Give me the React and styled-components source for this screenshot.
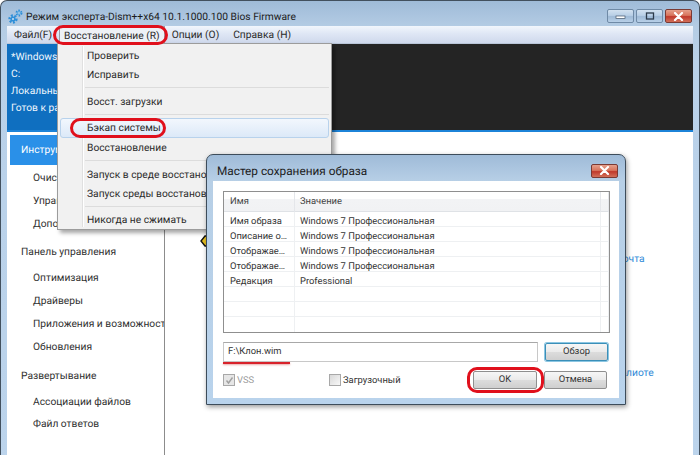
import React from 'react';
import styled, { createGlobalStyle } from 'styled-components';

const Global = createGlobalStyle`
	html, body { margin: 0; padding: 0; background: #fff; }
	body { font-family: Roboto, "Liberation Sans", sans-serif; font-size: 10.25px; color: #2a2a2a; text-rendering: geometricPrecision; }
`;

const Page = styled.div`
	position: relative;
	width: 700px;
	height: 455px;
	overflow: hidden;
`;
const Frame = styled.div`
	display: flex;
	flex-direction: column;
	height: 475px;
	box-sizing: border-box;
	padding: 0 6px 0 6px;
	border: 1px solid #42505e;
	border-bottom: none;
	border-radius: 7px 7px 0 0;
	background: linear-gradient(to bottom, #9fbbd8 0, #b4cce4 26px, #b9d1e9 60px, #bcd4ec 100%);
`;
const TitleBar = styled.div`
	display: flex;
	align-items: center;
	height: 25px;
	flex: none;
	box-sizing: border-box;
	padding-top: 5px;
	color: #1c1c1c;
`;
const AppIcon = styled.svg`
	width: 15px;
	height: 15px;
	margin: 0 3px 0 1px;
	flex: none;
`;
const TitleText = styled.span`
	flex: 1;
	white-space: nowrap;
`;
const Controls = styled.div`
	display: flex;
	gap: 2px;
	margin-right: 1px;
`;
const CtrlBtn = styled.div`
	width: 27px;
	height: 14px;
	display: flex;
	align-items: center;
	justify-content: center;
	box-sizing: border-box;
	border: 1px solid ${p => (p.$close ? '#7a3a34' : '#6f8aa6')};
	border-radius: 2px;
	background: ${p => p.$close
		? 'linear-gradient(to bottom, #e5a08c 0, #d8745c 45%, #c0392b 55%, #d2705a 100%)'
		: 'linear-gradient(to bottom, #d2e1f0 0, #b8cfe6 45%, #9fbad6 55%, #b8d0e8 100%)'};
`;
const MenuBar = styled.div`
	display: flex;
	align-items: center;
	height: 18px;
	flex: none;
	background: linear-gradient(to bottom, #f2f6fc 0, #dfe7f5 45%, #cfd9ec 100%);
	border-bottom: 1px solid #b9c5d8;
	box-sizing: border-box;
	padding-left: 7px;
`;
const MenuTitle = styled.div`
	position: relative;
	height: 100%;
	display: flex;
	align-items: center;
	white-space: nowrap;
	margin-right: ${p => p.$gap}px;
	${p => p.$open && `
		padding: 0 4px;
		box-sizing: border-box;
		border: 1px solid #9a9fa8;
		border-bottom: none;
		background: #eef1f6;
	`}
`;
const Ring = styled.div`
	position: absolute;
	inset: ${p => p.$inset};
	border: 3px solid #e0101c;
	border-radius: ${p => p.$r || 11}px;
	pointer-events: none;
	z-index: 5;
`;
const Strip = styled.div`
	display: flex;
	height: 88px;
	flex: none;
	border-bottom: 2px solid #1c83d8;
	box-sizing: border-box;
`;
const InfoPanel = styled.div`
	width: 157px;
	flex: none;
	box-sizing: border-box;
	padding-top: 4px;
	background: #0f6fc0;
	color: #eef6fd;
	display: flex;
	flex-direction: column;
`;
const InfoLine = styled.div`
	height: 17px;
	line-height: 17px;
	padding-left: 4px;
	white-space: nowrap;
`;
const DarkPanel = styled.div`
	flex: 1;
	background: #242424;
`;
const Body = styled.div`
	flex: 1;
	display: flex;
	min-height: 0;
	background: #fff;
`;
const Sidebar = styled.div`
	width: 158px;
	flex: none;
	box-sizing: border-box;
	border-right: 1px solid #8c8c8c;
	padding: 3px 0 0 3px;
	overflow: hidden;
	white-space: nowrap;
`;
const ActiveItem = styled.div`
	height: 30px;
	line-height: 30px;
	padding-left: 11px;
	background: #2a90e8;
	color: #fff;
	margin-bottom: 2px;
`;
const NavGroup = styled.div`
	height: 27px;
	line-height: 27px;
	margin-top: 3px;
	padding-left: 11px;
	color: #303030;
`;
const NavItem = styled.div`
	height: 22.8px;
	line-height: 22.8px;
	padding-left: 23px;
	color: #303030;
`;
const NavFirst = styled(NavItem)`
	margin-top: 2px;
`;
const Content = styled.div`
	flex: 1;
	display: flex;
	flex-direction: column;
	position: relative;
`;
const KeyIcon = styled.svg`
	width: 10px;
	height: 12px;
	margin: 103px 0 0 35px;
`;
const LinkLine = styled.div`
	color: #2f8ad8;
	white-space: nowrap;
	overflow: hidden;
	margin-left: ${p => p.$left}px;
	width: ${p => p.$w}px;
	margin-top: ${p => p.$top}px;
`;

const DropMenu = styled.div`
	position: absolute;
	left: 57px;
	top: 43px;
	width: 275px;
	height: 187px;
	box-sizing: border-box;
	padding: 2px;
	background: #f1f1f1;
	border: 1px solid #9c9c9c;
	box-shadow: 3px 3px 4px rgba(0, 0, 0, 0.35);
	z-index: 2;
`;
const MenuGutter = styled.div`
	position: absolute;
	left: 24px;
	top: 2px;
	bottom: 2px;
	width: 1px;
	background: #e0e0e0;
	border-right: 1px solid #fff;
`;
const MenuRow = styled.div`
	position: relative;
	height: ${p => p.$h || 19}px;
	line-height: ${p => p.$h || 19}px;
	padding-left: 27px;
	box-sizing: border-box;
	white-space: nowrap;
	${p => p.$active && `
		border: 1px solid #b8d2ec;
		border-radius: 3px;
		line-height: 18px;
		padding-left: 26px;
		background: linear-gradient(to bottom, #f2f7fd, #dce9f8);
	`}
`;
const MenuSep = styled.div`
	height: 1px;
	background: #dcdcdc;
	margin: 3.25px 0 3.25px 25px;
`;

const Dialog = styled.div`
	position: absolute;
	left: 206px;
	top: 154px;
	width: 420px;
	height: 251px;
	box-sizing: border-box;
	display: flex;
	flex-direction: column;
	padding: 0 6px 6px;
	border: 1px solid #3d4c5a;
	border-radius: 7px 7px 0 0;
	background: linear-gradient(to bottom, #9fbbd8 0, #b7cfe6 26px, #b9d3ec 100%);
	box-shadow: 1px 2px 5px rgba(0, 0, 0, 0.4);
	z-index: 3;
`;
const DialogTitle = styled(TitleBar)`
	height: 26px;
	padding-left: 4px;
	font-size: 11.8px;
`;
const DialogPanel = styled.div`
	flex: 1;
	background: #fff;
	box-sizing: border-box;
	padding: 10px 9px 0 10px;
	display: flex;
	flex-direction: column;
	font-size: 9.4px;
`;
const Table = styled.div`
	height: 142px;
	flex: none;
	box-sizing: border-box;
	border: 1px solid #8f8f8f;
	background: #fff;
	display: flex;
	flex-direction: column;
`;
const cols = '71px 306px 1fr';
const HeadRow = styled.div`
	display: grid;
	grid-template-columns: ${cols};
	height: 20px;
	line-height: 20px;
	flex: none;
	box-sizing: border-box;
	background: linear-gradient(to bottom, #fff 0, #fff 35%, #f2f3f5 40%, #f1f2f4 100%);
	border-bottom: 1px solid #dfe2e6;
`;
const HeadCell = styled.div`
	padding-left: ${p => p.$pad}px;
	border-right: 1px solid #e4e6ea;
	color: #444;
`;
const Row = styled.div`
	display: grid;
	grid-template-columns: ${cols};
	height: 15px;
	line-height: 19px;
	flex: none;
	box-sizing: border-box;
	border-bottom: 1px solid #eef0f2;
`;
const Cell = styled.div`
	padding-left: ${p => p.$pad}px;
	border-right: 1px solid #eef0f2;
	white-space: nowrap;
	color: #333;
`;
const Filler = styled(Row)`
	flex: 1;
	border-bottom: none;
`;
const PathRow = styled.div`
	display: flex;
	align-items: center;
	margin-top: 9px;
	height: 20px;
	gap: 7px;
`;
const PathInput = styled.div`
	position: relative;
	width: 315px;
	height: 20px;
	box-sizing: border-box;
	border: 1px solid #c8c8c8;
	border-top-color: #a8a8a8;
	background: #fff;
	line-height: 18px;
	padding-left: 4px;
	color: #333;
`;
const RedLine = styled.div`
	position: absolute;
	left: -1px;
	bottom: -3px;
	width: 67px;
	height: 2px;
	background: #d8222a;
	box-shadow: 0 1px 2px rgba(200, 30, 30, 0.4);
`;
const Button = styled.div`
	position: relative;
	width: ${p => p.$w || 63}px;
	height: 18px;
	line-height: 16px;
	box-sizing: border-box;
	text-align: center;
	color: #333;
	border: 1px solid ${p => (p.$focus ? '#3b8fb8' : '#8f8f8f')};
	border-radius: 2px;
	background: linear-gradient(to bottom, #f6f6f6 0, #ebebeb 48%, #dcdcdc 52%, #cfcfcf 100%);
	${p => p.$focus && 'box-shadow: 0 0 0 1px #8cc6e2;'}
`;
const BottomRow = styled.div`
	display: flex;
	align-items: center;
	margin-top: 9px;
	height: 18px;
`;
const CheckGroup = styled.div`
	display: flex;
	align-items: center;
	gap: 2px;
	width: ${p => p.$w}px;
	color: ${p => (p.$off ? '#9a9a9a' : '#333')};
	flex: none;
`;
const CheckBox = styled.div`
	width: 12px;
	height: 12px;
	box-sizing: border-box;
	border: 1px solid #a8a8a8;
	background: ${p => (p.$off ? '#e6e6e6' : 'linear-gradient(135deg, #d8d8d8, #f8f8f8)')};
	display: flex;
	align-items: center;
	justify-content: center;
`;
const ButtonPair = styled.div`
	display: flex;
	gap: 7px;
	margin-left: auto;
	margin-right: 3px;
`;

const CloseGlyph = () => (
	<svg width="11" height="9" viewBox="0 0 11 9">
		<path d="M2 1 L9 8 M9 1 L2 8" stroke="#fff" strokeWidth="2.2" strokeLinecap="round" />
	</svg>
);

const gearTeeth = (cx, cy, r) => (
	<circle cx={cx} cy={cy} r={r} fill="none" stroke="#2f8fd8" strokeWidth={r * 0.9} strokeDasharray={`${r * 0.55} ${r * 0.45}`} />
);

const rows = [
	['Имя образа', 'Windows 7 Профессиональная'],
	['Описание о…', 'Windows 7 Профессиональная'],
	['Отображае…', 'Windows 7 Профессиональная'],
	['Отображае…', 'Windows 7 Профессиональная'],
	['Редакция', 'Professional'],
	['', ''],
	['', ''],
];

const DataRow = ({ name, value }) => (
	<Row>
		<Cell $pad={6}>{name}</Cell>
		<Cell $pad={5}>{value}</Cell>
		<Cell $pad={0} />
	</Row>
);

export default function App() {
	return (
		<Page>
			<Global />
			<Frame>
				<TitleBar>
					<AppIcon viewBox="0 0 15 15">
						{gearTeeth(5, 10, 3.2)}
						<circle cx="5" cy="10" r="2.6" fill="#2f8fd8" />
						<circle cx="5" cy="10" r="1" fill="#cfe0f0" />
						{gearTeeth(11, 4, 2.4)}
						<circle cx="11" cy="4" r="2" fill="#5aa8e0" />
						<circle cx="11" cy="4" r="0.8" fill="#cfe0f0" />
					</AppIcon>
					<TitleText>Режим эксперта-Dism++x64 10.1.1000.100 Bios Firmware</TitleText>
					<Controls>
						<CtrlBtn>
							<svg width="11" height="6" viewBox="0 0 11 6"><rect x="1" y="3" width="9" height="2.4" fill="#fff" stroke="#44566a" strokeWidth="0.7" /></svg>
						</CtrlBtn>
						<CtrlBtn>
							<svg width="10" height="8" viewBox="0 0 10 8"><rect x="1.5" y="1" width="7" height="6" fill="none" stroke="#2c3a4a" strokeWidth="1.3" /></svg>
						</CtrlBtn>
						<CtrlBtn $close><CloseGlyph /></CtrlBtn>
					</Controls>
				</TitleBar>
				<MenuBar>
					<MenuTitle $gap={7}>Файл(F)</MenuTitle>
					<MenuTitle $gap={7} $open>
						Восстановление (R)
						<Ring $inset="-2px -4px -2px -7px" />
					</MenuTitle>
					<MenuTitle $gap={14}>Опции (O)</MenuTitle>
					<MenuTitle $gap={0}>Справка (H)</MenuTitle>
				</MenuBar>
				<Strip>
					<InfoPanel>
						<InfoLine>*Windows 7 Профессиональная</InfoLine>
						<InfoLine>C:</InfoLine>
						<InfoLine>Локальный</InfoLine>
						<InfoLine>Готов к работе</InfoLine>
					</InfoPanel>
					<DarkPanel />
				</Strip>
				<Body>
					<Sidebar>
						<ActiveItem>Инструменты</ActiveItem>
						<NavFirst>Очистка</NavFirst>
						<NavItem>Управление</NavItem>
						<NavItem>Дополнительно</NavItem>
						<NavGroup>Панель управления</NavGroup>
						<NavFirst>Оптимизация</NavFirst>
						<NavItem>Драйверы</NavItem>
						<NavItem>Приложения и возможности</NavItem>
						<NavItem>Обновления</NavItem>
						<NavGroup>Развертывание</NavGroup>
						<NavFirst>Ассоциации файлов</NavFirst>
						<NavItem>Файл ответов</NavItem>
					</Sidebar>
					<Content>
						<KeyIcon viewBox="0 0 10 12">
							<path d="M5 1 L1 6 L5 11 L10 11 L10 1 Z" fill="#e8c020" stroke="#111" strokeWidth="1.4" />
						</KeyIcon>
						<LinkLine $left={386} $w={100} $top={5}>Электронная почта</LinkLine>
						<LinkLine $left={443} $w={46} $top={101}>Библиотека</LinkLine>
					</Content>
				</Body>
			</Frame>

			<DropMenu>
				<MenuGutter />
				<MenuRow>Проверить</MenuRow>
				<MenuRow>Исправить</MenuRow>
				<MenuSep />
				<MenuRow>Восст. загрузки</MenuRow>
				<MenuSep />
				<MenuRow $active $h={20}>
					Бэкап системы
					<Ring $inset="-1px 162px -1px 9px" />
				</MenuRow>
				<MenuRow>Восстановление</MenuRow>
				<MenuSep />
				<MenuRow>Запуск в среде восстановления</MenuRow>
				<MenuRow>Запуск среды восстановления</MenuRow>
				<MenuSep />
				<MenuRow>Никогда не сжимать</MenuRow>
			</DropMenu>

			<Dialog>
				<DialogTitle>
					<TitleText>Мастер сохранения образа</TitleText>
					<Controls>
						<CtrlBtn $close><CloseGlyph /></CtrlBtn>
					</Controls>
				</DialogTitle>
				<DialogPanel>
					<Table>
						<HeadRow>
							<HeadCell $pad={6}>Имя</HeadCell>
							<HeadCell $pad={5}>Значение</HeadCell>
							<HeadCell $pad={0} />
						</HeadRow>
						{rows.map((r, i) => <DataRow key={i} name={r[0]} value={r[1]} />)}
						<Filler>
							<Cell $pad={0} />
							<Cell $pad={0} />
							<Cell $pad={0} />
						</Filler>
					</Table>
					<PathRow>
						<PathInput>
							F:\Клон.wim
							<RedLine />
						</PathInput>
						<Button $focus>Обзор</Button>
					</PathRow>
					<BottomRow>
						<CheckGroup $w={106} $off>
							<CheckBox $off>
								<svg width="9" height="9" viewBox="0 0 9 9"><path d="M1.5 4.5 L3.5 7 L7.5 1.5" fill="none" stroke="#a0a0a0" strokeWidth="1.4" /></svg>
							</CheckBox>
							VSS
						</CheckGroup>
						<CheckGroup $w={90}>
							<CheckBox />
							Загрузочный
						</CheckGroup>
						<ButtonPair>
							<Button $w={64}>
								OK
								<Ring $inset="-5px -8px -5px -7px" $r={10} />
							</Button>
							<Button>Отмена</Button>
						</ButtonPair>
					</BottomRow>
				</DialogPanel>
			</Dialog>
		</Page>
	);
}
